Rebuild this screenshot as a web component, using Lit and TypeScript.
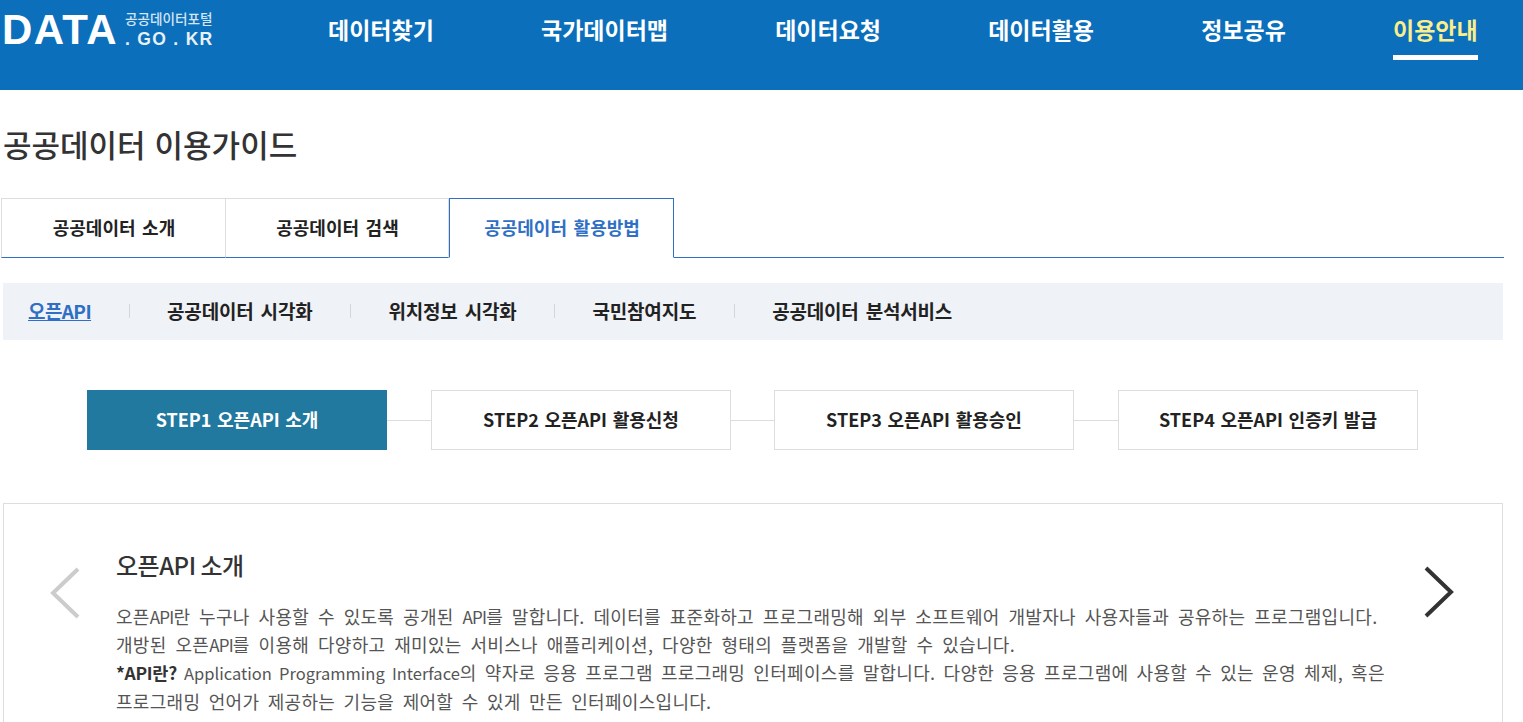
import { LitElement, html, css } from "lit";
import { customElement } from "lit/decorators.js";

const NAV = ["데이터찾기", "국가데이터맵", "데이터요청", "데이터활용", "정보공유", "이용안내"];
const TABS = ["공공데이터 소개", "공공데이터 검색", "공공데이터 활용방법"];
const SUB = ["오픈API", "공공데이터 시각화", "위치정보 시각화", "국민참여지도", "공공데이터 분석서비스"];
const STEPS = ["STEP1 오픈API 소개", "STEP2 오픈API 활용신청", "STEP3 오픈API 활용승인", "STEP4 오픈API 인증키 발급"];

@customElement("app-root")
export class AppRoot extends LitElement {
  static styles = css`
    :host { display: block; height: 722px; overflow: hidden; background: #fff; color: #333;
      font-family: "Noto Sans CJK KR", "Noto Sans", sans-serif; }
    * { box-sizing: border-box; }
    .hdr { height: 90px; background: #0b6fbb; display: flex; align-items: flex-start; padding-left: 2px; }
    .logo { display: flex; width: 326px; color: #fff; padding-top: 12px; font-family: "Liberation Sans", sans-serif; }
    .data { font-size: 42px; line-height: 36px; font-weight: 700; letter-spacing: 1.4px; }
    .logo2 { margin: -1px 0 0 7px; display: flex; flex-direction: column; }
    .kr { font-family: "Noto Sans CJK KR", sans-serif; font-size: 13.6px; line-height: 14px; font-weight: 500; color: #d5e5f3; }
    .go { font-size: 17.5px; line-height: 20px; margin-top: 4px; font-weight: 700; letter-spacing: 1.3px; color: #e8f1f8; white-space: pre; }
    nav { display: flex; gap: 107.2px; padding-top: 12px; }
    .nv { font-size: 23px; line-height: 34px; font-weight: 700; color: #fff; height: 48px; white-space: nowrap; }
    .nv.on { color: #fbee8c; border-bottom: 5px solid #fff; }
    h1 { margin: 0; padding: 32px 0 0 3px; font-size: 31px; line-height: 44px; font-weight: 500; color: #333; height: 108px; word-spacing: 2px; }
    .tabs { display: flex; height: 60px; border-bottom: 1px solid #2f6fc4; width: 1503px; margin-left: 1px; }
    .tab { width: 223px; height: 60px; padding: 0 0 2px 1px; display: flex; align-items: center; justify-content: center; border: 1px solid #ddd;
      border-left-width: 0; border-bottom: 1px solid #2f6fc4; font-size: 18px; font-weight: 700; color: #222; word-spacing: 2.5px; }
    .tab:first-child { width: 225px; border-left-width: 1px; }
    .tab.on { width: 225px; border: 1px solid #2f6fc4; border-bottom-color: #fff; color: #2f6fc4; }
    .sub { margin: 25px 0 0 3px; width: 1500px; height: 57px; padding: 0 0 2px 25px; background: #eff2f7; display: flex; align-items: center; }
    .si { font-size: 19px; font-weight: 700; color: #222; white-space: nowrap; letter-spacing: -0.2px; word-spacing: 3px; }
    .si.on { color: #2f6fc4; text-decoration: underline; letter-spacing: -0.6px; }
    .sep { width: 1px; height: 14px; background: #d3d7dd; margin: 0 37.5px; }
    .steps { display: flex; align-items: center; margin: 50px 0 0 87px; }
    .st { width: 300px; height: 60px; padding-bottom: 2px; display: flex; align-items: center; justify-content: center; border: 1px solid #ddd;
      font-size: 18px; font-weight: 700; color: #222; white-space: nowrap; word-spacing: 1.5px; }
    .st.on { background: #22799f; border-color: #22799f; color: #fff; }
    .ln { width: 44px; height: 1px; background: #ddd; }
    .ln:nth-child(4) { width: 43px; }
    .card { margin: 53px 0 0 3px; width: 1500px; height: 300px; border: 1px solid #ddd; display: flex; align-items: flex-start; }
    .arr { flex: none; width: 112px; padding: 63px 0 0 45px; }
    .arr.r { width: 112px; padding: 62px 0 0 33px; }
    .body { width: 1274px; padding-top: 43px; }
    h2 { margin: 0; font-size: 24px; line-height: 36px; font-weight: 500; color: #333; letter-spacing: -0.5px; word-spacing: 0; }
    p { margin: 19px 0 0; font-size: 18px; line-height: 28.2px; font-weight: 400; color: #555; letter-spacing: 0.3px; word-spacing: 4.5px; white-space: nowrap; }
    .la { font-size: 17px; letter-spacing: -0.8px; line-height: 1; }
    .en { font-size: 16.5px; letter-spacing: 0; word-spacing: 3.5px; line-height: 1; }
    .l3 { word-spacing: 3.8px; }
    .l4 { word-spacing: 4.1px; }
    b { font-size: 17.5px; font-weight: 700; color: #333; letter-spacing: -0.3px; word-spacing: 0; line-height: 1; }
    svg { display: block; fill: none; }
  `;

  render() {
    return html`
      <header class="hdr">
        <div class="logo">
          <div class="data">DATA</div>
          <div class="logo2">
            <div class="kr">공공데이터포털</div>
            <div class="go">. GO . KR</div>
          </div>
        </div>
        <nav>${NAV.map((n, i) => html`<div class="nv ${i === 5 ? "on" : ""}">${n}</div>`)}</nav>
      </header>
      <h1>공공데이터 이용가이드</h1>
      <div class="tabs">${TABS.map((t, i) => html`<div class="tab ${i === 2 ? "on" : ""}">${t}</div>`)}</div>
      <div class="sub">
        ${SUB.map((s, i) => html`${i ? html`<span class="sep"></span>` : ""}<span class="si ${i === 0 ? "on" : ""}">${s}</span>`)}
      </div>
      <div class="steps">
        ${STEPS.map((s, i) => html`${i ? html`<span class="ln"></span>` : ""}<div class="st ${i === 0 ? "on" : ""}">${s}</div>`)}
      </div>
      <section class="card">
        <div class="arr">
          <svg width="32" height="52" viewBox="0 0 32 52"><path d="M29 2 L4 26 L29 50" stroke="#ccc" stroke-width="4"/></svg>
        </div>
        <div class="body">
          <h2>오픈API 소개</h2>
          <p>오픈<span class="la">API</span>란 누구나 사용할 수 있도록 공개된 <span class="la">API</span>를 말합니다. 데이터를 표준화하고 프로그래밍해 외부 소프트웨어 개발자나 사용자들과 공유하는 프로그램입니다.<br />
          개방된 오픈<span class="la">API</span>를 이용해 다양하고 재미있는 서비스나 애플리케이션, 다양한 형태의 플랫폼을 개발할 수 있습니다.<br />
          <b>*API란?</b><span class="en"> Application Programming Interface</span><span class="l3">의 약자로 응용 프로그램 프로그래밍 인터페이스를 말합니다. 다양한 응용 프로그램에 사용할 수 있는 운영 체제, 혹은</span><br />
          <span class="l4">프로그래밍 언어가 제공하는 기능을 제어할 수 있게 만든 인터페이스입니다.</span></p>
        </div>
        <div class="arr r">
          <svg width="32" height="52" viewBox="0 0 32 52"><path d="M3 2 L28 26 L3 50" stroke="#333" stroke-width="4"/></svg>
        </div>
      </section>
    `;
  }
}
